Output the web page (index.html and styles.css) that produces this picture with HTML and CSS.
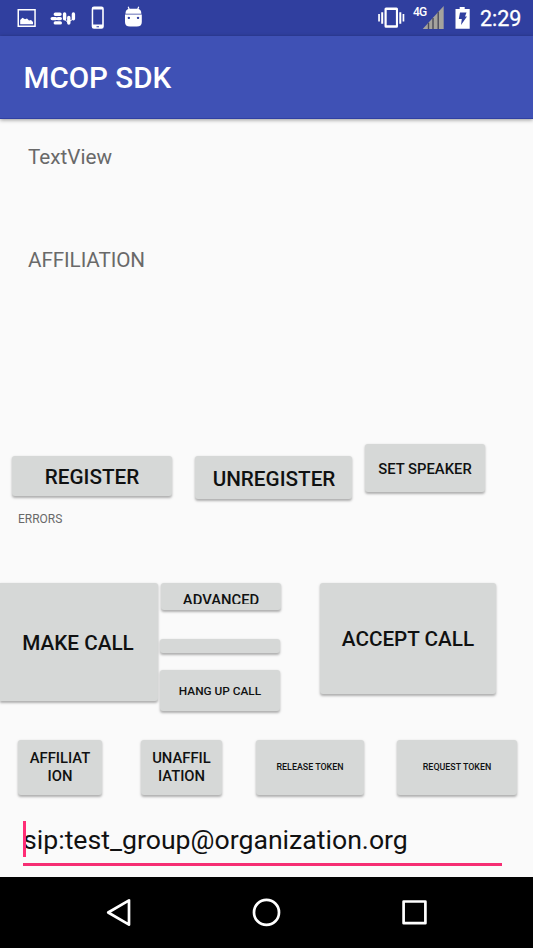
FILE: index.html
```html
<!DOCTYPE html>
<html lang="en">
<head>
<meta charset="utf-8">
<title>MCOP SDK</title>
<link rel="stylesheet" href="styles.css">
</head>
<body>
<div class="screen">
  <div class="status">
    <svg class="status-left" width="150" height="35" viewBox="0 0 150 35" fill="#fff">
      <path fill-rule="evenodd" d="M17.500 9h18.300v18H17.500zM19 10.500v15h15.300v-15z"/>
      <path d="M20.200 24.200v-4.200l2.300-2.300 2.500 1.600 2-.8 2 2 2-.5 2 2v2.200z"/>
      <g stroke="#fff" stroke-width="3.400" stroke-linecap="round">
        <path d="M55.300 14.300h4.700M52.200 18.600h3.400M58 18.600h2.300M55.300 22.900h5M64.600 14v4.800M68.800 17.500v5.500M73.400 14v4.800"/>
        <path d="M64.600 19.500l3 2.500M73.400 19l-3.500 2" stroke-width="1"/>
      </g>
      <path fill-rule="evenodd" d="M94 6.500h7.500a2.300 2.300 0 0 1 2.300 2.300v17.700a2.300 2.300 0 0 1-2.300 2.300H94a2.300 2.300 0 0 1-2.300-2.300V8.800a2.300 2.300 0 0 1 2.300-2.300zM93.200 9.500v15h9v-15zM96.500 26.200v1h2.500v-1z"/>
      <path fill-rule="evenodd" d="M125 14.500h16.800v7.500q0 4.500-5 4.500h-6.800q-5 0-5-4.500zM128.800 16.700a1.200 1.200 0 1 0 .1 0zM138 16.700a1.200 1.200 0 1 0 .1 0z"/>
      <path d="M125.500 13.800q-.2-4.300 4-5h8q4 .7 3.800 5z"/>
      <path d="M128.200 6.700l1.300 3.500M138.700 6.700l-1.300 3.500" stroke="#fff" stroke-width="1.200"/>
    </svg>
    <div class="status-right">
      <svg width="30" height="35" viewBox="377 0 30 35" fill="#fff">
        <path fill-rule="evenodd" d="M386 7.500h10.500q1.500 0 1.500 1.500v17.300q0 1.500-1.500 1.500H386q-1.500 0-1.500-1.500V9q0-1.500 1.500-1.500zM386.700 10v15.300h9.200V10z"/>
        <path d="M378.200 14h1.700v7.500h-1.700zM381.200 12.300h2v11.400h-2zM399.300 12.300h2v11.400h-2zM402.600 14h1.700v7.500h-1.700z"/>
      </svg>
      <span class="network">4G</span>
      <svg width="54" height="35" viewBox="422 0 54 35">
        <path d="M422.700 29L443.700 6v23z" fill="#a5a39d"/>
        <path d="M428.500 22.700v6.300M433 18v11M438.200 12v17" stroke="#4b4a58" stroke-width="1.400"/>
        <path d="M455.500 9h4.200V7h5v2h5v19.700h-14.200z" fill="#fff"/>
        <path d="M460 12.500h6.500l-1.500 4h2l-6 8.500.8-6h-3z" fill="#303f9f"/>
      </svg>
      <span class="clock">2:29</span>
    </div>
  </div>
  <header class="appbar">MCOP SDK</header>
  <main class="content">
    <div class="label">TextView</div>
    <div class="label affiliation">AFFILIATION</div>
    <div class="row registration">
      <button class="btn register">REGISTER</button>
      <button class="btn unregister">UNREGISTER</button>
      <button class="btn speaker">SET SPEAKER</button>
    </div>
    <div class="errors">ERRORS</div>
    <div class="row calls">
      <button class="btn make">MAKE CALL</button>
      <div class="stack">
        <button class="btn advanced"><span>ADVANCED</span></button>
        <button class="btn blank" aria-label="Empty"></button>
        <button class="btn hangup">HANG UP CALL</button>
      </div>
      <button class="btn accept">ACCEPT CALL</button>
    </div>
    <div class="row tokens">
      <button class="btn affil">AFFILIAT<br>ION</button>
      <button class="btn unaffil">UNAFFIL<br>IATION</button>
      <button class="btn release">RELEASE TOKEN</button>
      <button class="btn request">REQUEST TOKEN</button>
    </div>
    <div class="field">sip:test_group@organization.org</div>
  </main>
  <nav class="nav">
    <svg width="533" height="71" viewBox="0 877 533 71" fill="none" stroke="#fff" stroke-width="2.700" stroke-linejoin="round">
      <path d="M108.200 912.500L129 900.300v24.400z"/>
      <circle cx="266.500" cy="912.400" r="12.500"/>
      <path d="M403.600 901.500h21.800v21.700h-21.800z"/>
    </svg>
  </nav>
</div>
</body>
</html>
```
FILE: styles.css
```css
* { box-sizing: border-box; }
body {
  margin: 0;
  font-family: Roboto, "Liberation Sans", sans-serif;
  background: #fafafa;
}
.screen {
  width: 533px;
  height: 948px;
  display: flex;
  flex-direction: column;
  overflow: hidden;
}
.status {
  height: 36px;
  flex: none;
  display: flex;
  justify-content: space-between;
  background: #303f9f;
  color: #fff;
}
.status-right { display: flex; width: 156px; }
.network {
  width: 15px;
  padding: 5px 0 0 6px;
  font-size: 12px;
  line-height: 14px;
  font-weight: 500;
  letter-spacing: -0.8px;
  white-space: nowrap;
}
.clock {
  padding-left: 4px;
  font-size: 21.500px;
  line-height: 37px;
  white-space: nowrap;
  -webkit-text-stroke: 0.3px #fff;
}
.appbar {
  height: 83px;
  flex: none;
  padding-left: 23.500px;
  background: #3f51b5;
  border-bottom: 1px solid #3040a2;
  box-shadow: 0 1px 4px rgba(0, 0, 0, .4);
  color: #fff;
  font-size: 29.600px;
  font-weight: 500;
  line-height: 85px;
}
.content {
  height: 758px;
  flex: none;
  padding-top: 26px;
}
.label {
  padding-left: 28px;
  font-size: 20.700px;
  line-height: 24px;
  color: #696969;
}
.affiliation { margin-top: 79px; letter-spacing: -0.1px; }
.row { display: flex; align-items: flex-start; }
.btn {
  flex: none;
  display: flex;
  align-items: center;
  justify-content: center;
  margin: 0;
  padding: 0;
  border: 0;
  border-radius: 3px;
  background: #d6d8d7;
  box-shadow: 0 1.500px 2.500px rgba(0, 0, 0, .3);
  color: #101111;
  font: 500 20.700px/24px Roboto, "Liberation Sans", sans-serif;
  white-space: nowrap;
}
.registration { height: 68px; margin-top: 172px; padding-left: 12px; }
.register { width: 160px; height: 40px; margin-top: 12px; padding-top: 2px; }
.unregister { width: 157px; height: 43px; margin: 12px 0 0 23px; padding: 3px 0 0 1px; }
.speaker { width: 120px; height: 48px; margin-left: 13px; padding-top: 1px; font-size: 14.800px; }
.errors {
  padding-left: 18px;
  font-size: 12px;
  line-height: 14px;
  color: #696969;
}
.calls { height: 157px; margin-top: 57px; }
.make { width: 158px; height: 118px; border-radius: 0 3px 3px 0; padding-right: 2px; padding-top: 2px; }
.stack { width: 122px; margin-left: 2px; }
.advanced {
  width: 120px;
  height: 27px;
  margin-left: 1px;
  align-items: flex-start;
  padding-top: 8px;
  font-size: 14.800px;
  line-height: 18px;
}
.advanced span { height: 13px; overflow: hidden; }
.blank { width: 120px; height: 14px; margin-top: 29px; }
.hangup { width: 120px; height: 41px; margin-top: 17px; font-size: 11.840px; }
.accept { width: 176px; height: 111px; margin-left: 38px; padding-top: 1px; }
.tokens { height: 81px; padding-left: 18px; }
.tokens .btn { height: 55px; font-size: 14.800px; line-height: 17.300px; }
.affil { width: 84px; }
.unaffil { width: 81px; margin-left: 39px; }
.tokens .release { width: 108px; margin-left: 34px; font-size: 8.880px; padding-top: 1px; }
.tokens .request { width: 120px; margin-left: 33px; font-size: 8.880px; padding-top: 1px; }
.field {
  position: relative;
  width: 478.500px;
  height: 45px;
  margin-left: 23px;
  border-bottom: 3px solid #f62e73;
  color: #111;
  font-size: 26.650px;
  line-height: 39px;
}
.field::before {
  content: "";
  position: absolute;
  left: 0;
  top: 0;
  width: 2.500px;
  height: 36px;
  background: #ff2d76;
}
.nav { height: 71px; flex: none; background: #000; }
.nav svg { display: block; }
```
